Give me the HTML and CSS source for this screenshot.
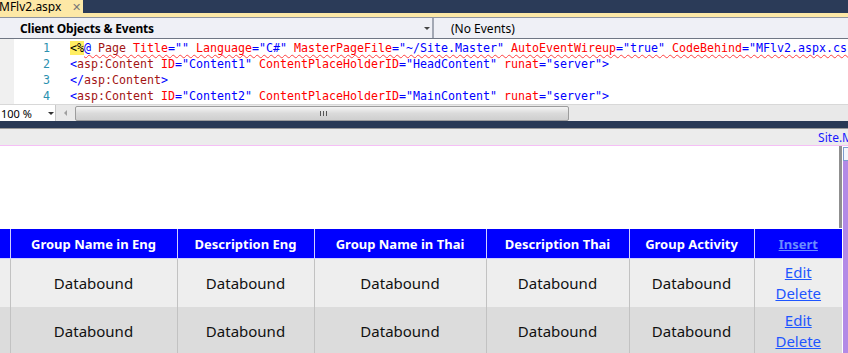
FILE: index.html
```html
<!DOCTYPE html>
<html lang="en">

<head>
	<meta charset="UTF-8">
	<title>MFlv2.aspx</title>
	<link rel="stylesheet" href="styles.css">
</head>

<body>
	<div class="tabbar">
		<div class="tab">
			<span class="tab-name">MFlv2.aspx</span>
			<span class="tab-close">&#x2715;</span>
		</div>
	</div>
	<div class="tabstrip"></div>

	<div class="navbar">
		<div class="nav-left">
			<span class="nav-label">Client Objects &amp; Events</span>
			<span class="nav-arrow"></span>
		</div>
		<div class="nav-right">(No Events)</div>
	</div>

	<div class="editor">
		<div class="gutter"></div>
		<div class="linenums">
			<div>1</div>
			<div>2</div>
			<div>3</div>
			<div>4</div>
		</div>
		<div class="code">
			<div class="line"><span class="hl">&lt;%</span><span class="squig"><span class="d">@</span> <span class="t">Page</span> <span class="a">Title</span><span class="d">=</span><span class="v">""</span> <span class="a">Language</span><span class="d">=</span><span class="v">"C#"</span> <span class="a">MasterPageFile</span><span class="d">=</span><span class="v">"~/Site.Master"</span> <span class="a">AutoEventWireup</span><span class="d">=</span><span class="v">"true"</span> <span class="a">CodeBehind</span><span class="d">=</span><span class="v">"MFlv2.aspx.cs"</span></span></div>
			<div class="line"><span class="d">&lt;</span><span class="t">asp:Content</span> <span class="a">ID</span><span class="d">=</span><span class="v">"Content1"</span> <span class="a">ContentPlaceHolderID</span><span class="d">=</span><span class="v">"HeadContent"</span> <span class="a">runat</span><span class="d">=</span><span class="v">"server"</span><span class="d">&gt;</span></div>
			<div class="line"><span class="d">&lt;/</span><span class="t">asp:Content</span><span class="d">&gt;</span></div>
			<div class="line"><span class="d">&lt;</span><span class="t">asp:Content</span> <span class="a">ID</span><span class="d">=</span><span class="v">"Content2"</span> <span class="a">ContentPlaceHolderID</span><span class="d">=</span><span class="v">"MainContent"</span> <span class="a">runat</span><span class="d">=</span><span class="v">"server"</span><span class="d">&gt;</span></div>
		</div>
	</div>

	<div class="hscroll">
		<div class="zoom">
			<span>100 %</span>
			<span class="zoom-arrow"></span>
		</div>
		<div class="track">
			<span class="left-arrow"></span>
			<div class="thumb"><span class="grip"></span></div>
		</div>
	</div>

	<div class="splitter"></div>

	<div class="sitebar"><span>Site.M</span></div>

	<div class="surface">
		<div class="main">
			<div class="blank"></div>
			<table class="grid">
				<colgroup>
					<col class="c0">
					<col class="c1">
					<col class="c2">
					<col class="c3">
					<col class="c4">
					<col class="c5">
					<col class="c6">
				</colgroup>
				<thead>
					<tr>
						<th></th>
						<th>Group Name in Eng</th>
						<th>Description Eng</th>
						<th>Group Name in Thai</th>
						<th>Description Thai</th>
						<th>Group Activity</th>
						<th><a class="insert" href="#">Insert</a></th>
					</tr>
				</thead>
				<tbody>
					<tr class="odd">
						<td></td>
						<td>Databound</td>
						<td>Databound</td>
						<td>Databound</td>
						<td>Databound</td>
						<td>Databound</td>
						<td class="links"><a href="#">Edit</a><a href="#">Delete</a></td>
					</tr>
					<tr class="even">
						<td></td>
						<td>Databound</td>
						<td>Databound</td>
						<td>Databound</td>
						<td>Databound</td>
						<td>Databound</td>
						<td class="links"><a href="#">Edit</a><a href="#">Delete</a></td>
					</tr>
				</tbody>
			</table>
		</div>
		<div class="vbar">
			<div class="vbar-box"></div>
		</div>
	</div>
</body>

</html>
```

FILE: styles.css
```css
body {
	margin: 0;
	padding: 0;
	width: 848px;
	height: 353px;
	overflow: hidden;
	background: #fff;
	font-family: "Noto Sans", "Open Sans", sans-serif;
}

/* document tab row */
.tabbar {
	height: 13px;
	background-color: #2b3b58;
	display: flex;
}

.tab {
	width: 83px;
	height: 13px;
	background: #fde8a6;
	display: flex;
	align-items: center;
	overflow: hidden;
}

.tab-name {
	font-size: 12px;
	color: #000;
	margin-left: -1px;
	line-height: 13px;
}

.tab-close {
	font-size: 11px;
	color: #777;
	margin-left: 11px;
	line-height: 13px;
}

.tabstrip {
	height: 4px;
	background: #fde8a6;
	border-bottom: 1px solid #8e94a0;
}

/* object / event drop downs */
.navbar {
	height: 20px;
	background: #eff0f6;
	border-bottom: 1px solid #6f7684;
	display: flex;
	font-size: 12px;
}

.nav-left {
	width: 432px;
	display: flex;
	align-items: center;
	border-right: 2px solid #a3a8b4;
}

.nav-label {
	font-weight: bold;
	margin-left: 20px;
	flex: 1;
	letter-spacing: -0.2px;
}

.nav-arrow {
	width: 0;
	height: 0;
	border-left: 3px solid transparent;
	border-right: 3px solid transparent;
	border-top: 3px solid #444;
	margin-right: 2px;
}

.nav-right {
	display: flex;
	align-items: center;
	padding-left: 17px;
}

/* code editor */
.editor {
	height: 65px;
	display: flex;
	background: #fff;
	overflow: hidden;
}

.gutter {
	width: 14px;
	background: #f0f0f0;
}

.linenums {
	width: 36px;
	padding-top: 1px;
	text-align: right;
	color: #2b91af;
	font-family: "DejaVu Sans Mono", monospace;
	font-size: 11.63px;
}

.linenums div,
.line {
	height: 16px;
	line-height: 16px;
}

.code {
	margin-left: 20px;
	padding-top: 1px;
	font-family: "DejaVu Sans Mono", monospace;
	font-size: 11.63px;
	flex: 1;
	overflow: hidden;
}

.line {
	white-space: pre;
}

.hl {
	background: #ffee62;
	color: #000;
}

.squig {
	text-decoration: underline wavy #ff4040;
	text-decoration-thickness: 1px;
	text-underline-offset: 2px;
	text-decoration-skip-ink: none;
}

.d,
.v {
	color: #0000ff;
}

.t {
	color: #a31515;
}

.a {
	color: #ff0000;
}

/* horizontal scroll row */
.hscroll {
	height: 16px;
	display: flex;
	border-top: 1px solid #d8d8d8;
	background: #ebebeb;
}

.zoom {
	width: 55px;
	background: #fff;
	display: flex;
	align-items: center;
	font-size: 11px;
	border-right: 1px solid #c8c8c8;
}

.zoom span:first-child {
	flex: 1;
	padding-left: 1px;
}

.zoom-arrow {
	border-left: 3px solid transparent;
	border-right: 3px solid transparent;
	border-top: 3px solid #333;
	margin-right: 1px;
}

.track {
	flex: 1;
	display: flex;
	align-items: center;
	background: #e9e9e9;
}

.left-arrow {
	border-top: 3px solid transparent;
	border-bottom: 3px solid transparent;
	border-right: 3px solid #a0a0a0;
	margin-left: 8px;
	margin-right: 8px;
}

.thumb {
	width: 492px;
	height: 13px;
	border: 1px solid #9c9c9c;
	border-radius: 2px;
	background: linear-gradient(#f4f4f4, #dadada 50%, #cfcfcf);
	display: flex;
	justify-content: center;
	align-items: center;
}

.grip {
	width: 7px;
	height: 5px;
	background: repeating-linear-gradient(90deg, #555 0 1px, transparent 1px 3px);
	margin-left: 2px;
}

.splitter {
	height: 7px;
	background: #293955;
	border-bottom: 1px solid #9a9a9a;
}

/* design surface */
.sitebar {
	height: 16px;
	background: #ececec;
	border-bottom: 1px solid #f6bff6;
	font-size: 12px;
	color: #1a1aff;
	display: flex;
	justify-content: flex-end;
	align-items: center;
	overflow: hidden;
	white-space: nowrap;
}

.sitebar span {
	margin-right: -5px;
}

.surface {
	display: flex;
}

.main {
	width: 843px;
}

.blank {
	height: 82px;
	margin-right: 1px;
	border-right: 3px solid #8f8f8f;
	margin-bottom: 1px;
}

.vbar {
	width: 5px;
	height: 210px;
	background: #b38ae6;
	margin-top: 1px;
}

.vbar-box {
	height: 12px;
	border: 1px solid #7c9ccf;
	border-right: none;
	background: #f4f6fb;
}

/* grid view */
.grid {
	table-layout: fixed;
	border-collapse: collapse;
	width: 842px;
}

.c0 { width: 10px; }
.c1 { width: 167px; }
.c2 { width: 137px; }
.c3 { width: 172px; }
.c4 { width: 143px; }
.c5 { width: 125px; }
.c6 { width: 88px; }

.grid th {
	height: 29px;
	padding: 0;
	background: #0000ff;
	color: #fff;
	font-size: 13px;
	font-weight: bold;
	border: 1px solid #d0d0ff;
	border-top: none;
	text-align: center;
}

.grid th:first-child,
.grid td:first-child {
	border-left: none;
}

.grid th:last-child,
.grid td:last-child {
	border-right: none;
}

.insert {
	color: #6b8cff;
}

.grid td {
	padding: 0;
	border: 1px solid #c2c2c2;
	border-top: none;
	border-bottom: none;
	text-align: center;
	font-size: 15px;
	color: #111;
}

.grid tr.odd td {
	background: #eeeeee;
	height: 48px;
}

.grid tr.even td {
	background: #dcdcdc;
	height: 48px;
}

.links a {
	display: block;
	color: #1e56ff;
	line-height: 21px;
}
```
